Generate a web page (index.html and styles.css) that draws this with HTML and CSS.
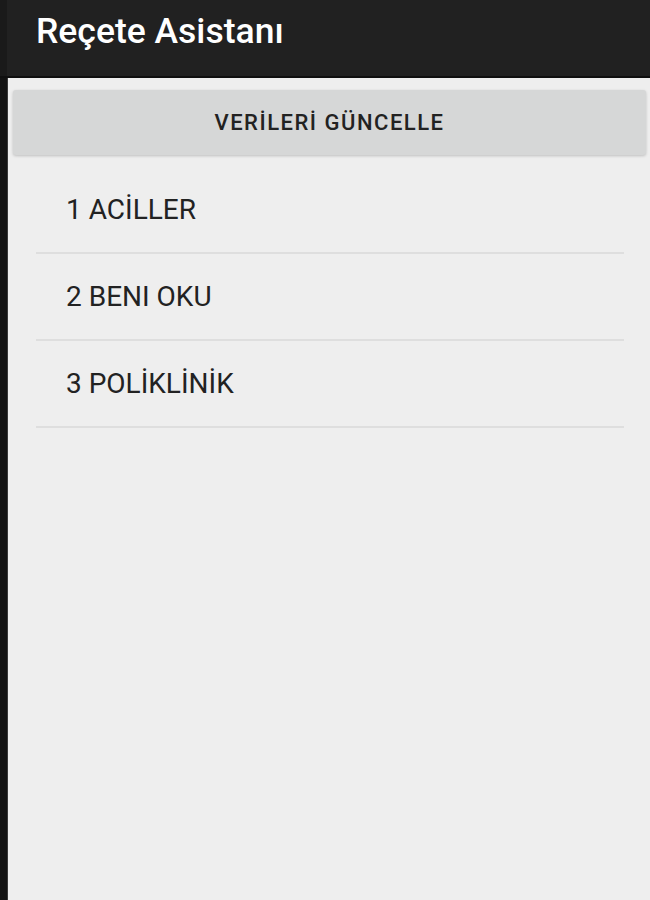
FILE: index.html
```html
<!DOCTYPE html>
<html lang="tr">
<head>
    <meta charset="UTF-8">
    <meta name="viewport" content="width=device-width, initial-scale=1.0">
    <title>Reçete Asistanı</title>
    <link rel="stylesheet" href="styles.css">
</head>
<body>
    <div class="app">
        <div class="edge"></div>
        <div class="screen">
            <header class="toolbar">
                <h1>Reçete Asistanı</h1>
            </header>
            <button class="update">VERİLERİ GÜNCELLE</button>
            <ul class="menu">
                <li>1 ACİLLER</li>
                <li>2 BENI OKU</li>
                <li>3 POLİKLİNİK</li>
            </ul>
        </div>
    </div>
</body>
</html>
```

FILE: styles.css
```css
/* Overall Styling */
body {
    margin: 0;
    background-color: #eeeeee;
    font-family: Roboto, "Noto Sans", sans-serif;
    color: #212121;
}

.app {
    display: flex;
    height: 900px;
}

/* Dark strip on the left edge */
.edge {
    width: 7px;
    background-color: #131313;
    border-right: 1px solid #3a3a3a;
}

.screen {
    flex: 1;
    display: flex;
    flex-direction: column;
    background-color: #eeeeee;
}

/* Title bar */
.toolbar {
    height: 78px;
    background-color: #212121;
    border-bottom: 2px solid #0f0f0f;
    box-sizing: border-box;
    display: flex;
    align-items: center;
    margin-left: -8px;
    padding-left: 36px;
    box-shadow: inset 7px 0 0 #1a1a1a;
}

.toolbar h1 {
    margin: -14px 0 0 0;
    font-size: 35.5px;
    font-weight: 500;
    color: #ffffff;
}

/* Update button */
.update {
    margin: 12px 4px 0 5px;
    height: 65px;
    border: none;
    border-radius: 3px;
    background-color: #d6d7d7;
    box-shadow: 0 1px 3px rgba(0, 0, 0, 0.2);
    font-family: Roboto, "Noto Sans", sans-serif;
    font-size: 22px;
    font-weight: 500;
    color: #222222;
    letter-spacing: 1.5px;
}

/* Menu list */
.menu {
    list-style: none;
    margin: 12px 26px 0 28px;
    padding: 0;
}

.menu li {
    height: 85px;
    display: flex;
    align-items: center;
    padding-left: 30px;
    border-bottom: 2px solid #dedede;
    font-size: 28px;
    color: #222222;
}
```
